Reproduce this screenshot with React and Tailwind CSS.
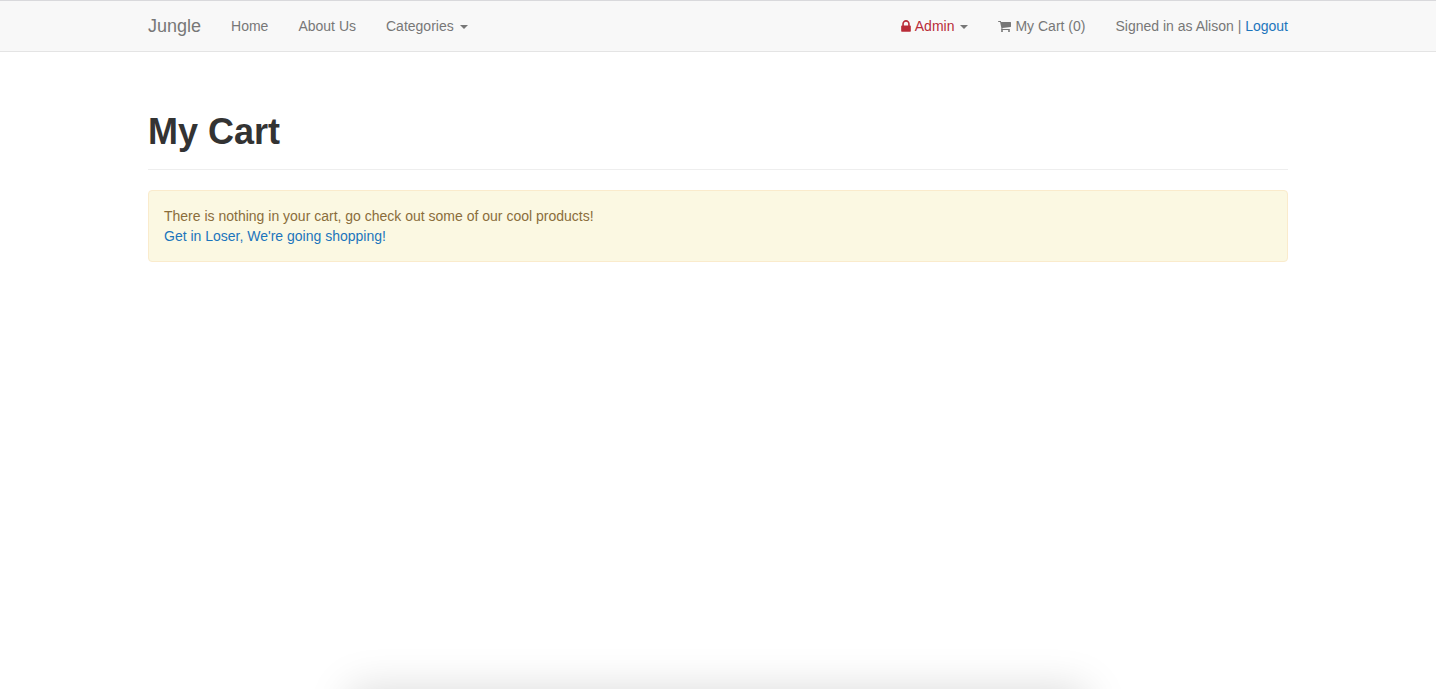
import React from "react";

const navItem = "flex items-center text-[#777777] hover:text-[#333333]";
const link = "text-[#1c75bc] hover:underline";

function Caret() {
  return (
    <span
      aria-hidden="true"
      className="ml-1.5 mt-0.5 size-0 border-x-4 border-t-4 border-x-transparent border-t-[#777777]"
    />
  );
}

function LockIcon() {
  return (
    <svg aria-hidden="true" viewBox="320 0 1152 1792" className="mr-1 h-[15px] w-[10px] fill-current">
      <path d="M640 768h512v-192q0-106-75-181t-181-75-181 75-75 181v192zm832 96v576q0 40-28 68t-68 28h-960q-40 0-68-28t-28-68v-576q0-40 28-68t68-28h32v-192q0-184 132-316t316-132 316 132 132 316v192h32q40 0 68 28t28 68z" />
    </svg>
  );
}

function CartIcon() {
  return (
    <svg aria-hidden="true" viewBox="64 0 1664 1792" className="mr-1 h-3.5 w-[13px] fill-current">
      <path d="M704 1536q0 52-38 90t-90 38-90-38-38-90 38-90 90-38 90 38 38 90zm896 0q0 52-38 90t-90 38-90-38-38-90 38-90 90-38 90 38 38 90zm128-1088v512q0 24-16.5 42.5t-40.5 21.5l-1044 122q13 60 13 70 0 16-24 64h920q26 0 45 19t19 45-19 45-45 19h-1024q-26 0-45-19t-19-45q0-11 8-31.5t16-36 21.5-40 15.5-29.5l-177-823h-204q-26 0-45-19t-19-45 19-45 45-19h256q16 0 28.5 6.5t19.5 15.5 13 24.5 8 26 5.5 29.5 4.5 26h1201q26 0 45 19t19 45z" />
    </svg>
  );
}

function Navbar() {
  return (
    <header className="border-y border-t-[#d9d9dc] border-b-[#e4e4e4] bg-[#f8f8f8]">
      <nav className="mx-auto flex h-[50px] w-full max-w-[1170px] items-center justify-between px-[15px]">
        <div className="flex items-center gap-[30px]">
          <a href="#" className="text-lg leading-5 text-[#777777]">Jungle</a>
          <a href="#" className={navItem}>Home</a>
          <a href="#" className={navItem}>About Us</a>
          <button type="button" className={navItem}>Categories<Caret /></button>
        </div>
        <div className="flex items-center gap-[30px]">
          <button type="button" className="flex items-center text-[#b92c38]">
            <LockIcon />
            Admin
            <Caret />
          </button>
          <a href="#" className={navItem}>
            <CartIcon />
            My Cart (0)
          </a>
          <p className="text-[#777777]">
            Signed in as Alison | <a href="#" className={link}>Logout</a>
          </p>
        </div>
      </nav>
    </header>
  );
}

export default function App() {
  return (
    <div className="relative flex min-h-screen flex-col overflow-hidden bg-white font-['Liberation_Sans',Arial,sans-serif] text-sm leading-5 text-[#333333] antialiased">
      <Navbar />
      <main className="mx-auto w-full max-w-[1170px] px-[15px] pt-[60px]">
        <h1 className="border-b border-[#eeeeee] pb-[17px] text-4xl leading-10 font-bold">My Cart</h1>
        <div className="mt-5 rounded border border-[#faebcc] bg-[#fbf8e2] p-[15px] text-[#8a6d3b]">
          <p>There is nothing in your cart, go check out some of our cool products!</p>
          <a href="#" className={link}>Get in Loser, We're going shopping!</a>
        </div>
      </main>
      <div
        aria-hidden="true"
        className="pointer-events-none absolute top-full left-1/2 h-40 w-[736px] -translate-x-1/2 shadow-[0_0_40px_rgba(0,0,0,0.15)]"
      />
    </div>
  );
}
